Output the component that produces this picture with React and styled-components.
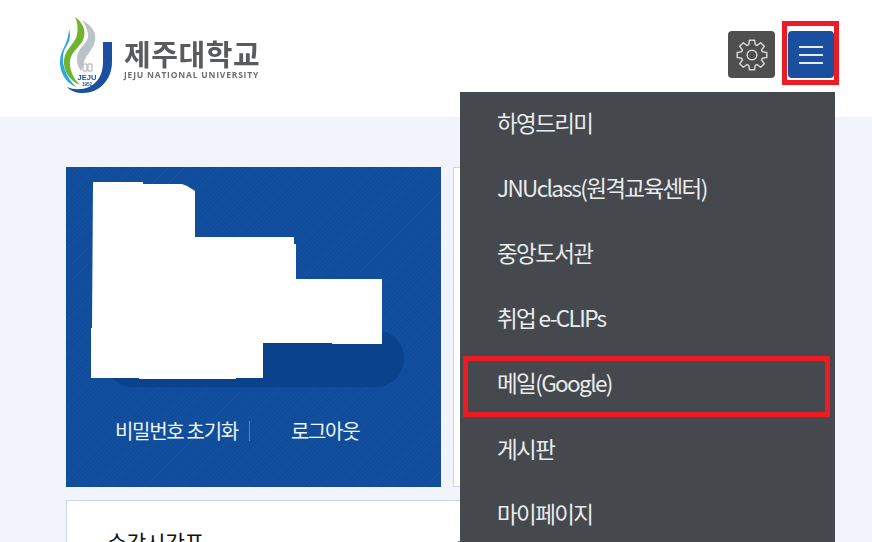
import React from 'react';
import styled, { createGlobalStyle } from 'styled-components';

const GlobalStyle = createGlobalStyle`
  html, body {
    margin: 0;
    padding: 0;
    height: 542px;
    overflow: hidden;
    background: #f1f4fa;
    font-family: "Noto Sans CJK KR", "Noto Sans", sans-serif;
  }
`;

const Page = styled.div`
  position: relative;
  width: 872px;
  height: 542px;
  overflow: hidden;
`;

const Header = styled.header`
  display: flex;
  justify-content: space-between;
  box-sizing: border-box;
  height: 117px;
  padding: 17px 38px 0 60px;
  background: #fff;
`;

const Logo = styled.div`
  display: flex;
  align-items: flex-start;
  gap: 10px;
  height: 77px;
  filter: blur(0.35px);
`;

const LogoText = styled.div`
  display: flex;
  flex-direction: column;
  gap: 4px;
  padding-top: 23px;
`;

const LogoName = styled.span`
  color: #5a5b5d;
  font-size: 29px;
  font-weight: 700;
  line-height: 26px;
  letter-spacing: 0.55px;
  white-space: nowrap;
`;

const LogoSub = styled.span`
  color: #6d6e71;
  font-family: "Open Sans", "Liberation Sans", sans-serif;
  font-size: 8.5px;
  font-weight: 700;
  line-height: 10px;
  letter-spacing: 0.8px;
  white-space: nowrap;
`;

const Actions = styled.div`
  display: flex;
  gap: 13px;
  padding-top: 14px;
`;

const IconButton = styled.div`
  position: relative;
  display: flex;
  align-items: center;
  justify-content: center;
  width: ${props => props.$wide}px;
  height: 47px;
  border-radius: 4px;
  background: ${props => props.$bg};
`;

const Burger = styled.div`
  display: flex;
  flex-direction: column;
  gap: 6px;
  width: 24px;
`;

const BurgerLine = styled.span`
  display: block;
  height: 2px;
  background: #e6ebf5;
`;

const Highlight = styled.span`
  position: absolute;
  top: ${props => props.$top}px;
  left: ${props => props.$left}px;
  width: ${props => props.$width}px;
  height: ${props => props.$height}px;
  box-sizing: border-box;
  border: 5px solid #ed1c24;
  pointer-events: none;
`;

const Main = styled.main`
  display: grid;
  grid-template-columns: 375px 1fr;
  grid-template-rows: 320px 1fr;
  gap: 13px 12px;
  width: 760px;
  padding: 50px 0 0 66px;
`;

const ProfileCard = styled.section`
  position: relative;
  display: flex;
  flex-direction: column;
  align-items: center;
  background-color: #0f4c9c;
  background-image: repeating-linear-gradient(
    135deg,
    rgba(255, 255, 255, 0.022) 0 1px,
    transparent 1px 3px
  );
`;

const Pill = styled.div`
  width: 300px;
  height: 57px;
  margin-top: 163px;
  border-radius: 29px;
  background: #0a438b;
`;

const LinkRow = styled.div`
  display: flex;
  align-items: center;
  align-self: flex-start;
  margin: 30px 0 0 49px;
  color: #f2f5fb;
  font-size: 20px;
  letter-spacing: -1.3px;
  line-height: 28px;
`;

const LinkText = styled.span`
  white-space: nowrap;
`;

const LinkDivider = styled.span`
  width: 1px;
  height: 20px;
  margin: 0 41px 0 11px;
  background: #5c83bd;
`;

const Redaction = styled.div`
  position: absolute;
  top: 0;
  left: 0;
  width: 375px;
  height: 320px;
  background: #fff;
  clip-path: polygon(
    27px 15px, 77px 15px, 77px 17px, 116px 17px, 121px 19px, 126px 22px, 129px 24px,
    129px 70px, 228px 70px, 228px 77px, 230px 77px, 230px 112px, 316px 112px,
    316px 177px, 266px 177px, 266px 176px, 197px 176px, 197px 211px, 170px 211px,
    170px 212px, 73px 212px, 73px 211px, 25px 211px, 25px 161px, 26px 161px
  );
`;

const SideCard = styled.section`
  box-sizing: border-box;
  border: 1px solid #c9d6ec;
  background: #fff;
`;

const ScheduleCard = styled.section`
  grid-column: 1 / 3;
  box-sizing: border-box;
  height: 120px;
  padding: 26px 40px;
  border: 1px solid #c9d6ec;
  background: #fff;
`;

const ScheduleHead = styled.div`
  display: flex;
  justify-content: space-between;
  align-items: center;
  width: 354px;
`;

const ScheduleTitle = styled.h2`
  margin: 0;
  color: #111;
  font-size: 21.5px;
  font-weight: 400;
  line-height: 30px;
  letter-spacing: -0.4px;
`;

const ScheduleMark = styled.span`
  width: 3px;
  height: 16px;
  margin-top: 14px;
  background: #6a86d8;
`;

const Menu = styled.nav`
  position: absolute;
  top: 92px;
  left: 460px;
  width: 375px;
  height: 450px;
  overflow: hidden;
  background: #45494d;
`;

const MenuItem = styled.a`
  position: relative;
  display: flex;
  align-items: center;
  box-sizing: border-box;
  height: 65.2px;
  padding: 0 0 6px 37px;
  color: #e9ecef;
  font-size: 22.5px;
  letter-spacing: -1.62px;
  white-space: nowrap;
`;

const menuItems = [
  '하영드리미',
  'JNUclass(원격교육센터)',
  '중앙도서관',
  '취업 e-CLIPs',
  '메일(Google)',
  '게시판',
  '마이페이지',
];

const Emblem = () => (
  <svg width="54" height="77" viewBox="60 17 54 77" aria-hidden="true">
    <path d="M82 20 C91 25 97 32 95 41 C93 50 86 55 84 62 C83 65 82 68 81 71 C76 64 76 57 79 51 C83 44 89 41 88 34 C87 29 85 24 82 20 Z" fill="#bcc3c8" />
    <path d="M75 17 C82 22 86 29 84 37 C82 46 72 50 70 60 C69 69 73 78 80 85 C70 81 63 71 64 60 C65 49 75 44 77 35 C78 29 78 23 75 17 Z" fill="#6cb52d" />
    <path d="M69 29 C71 35 70 41 66 47 C62 53 62 62 65 70 C67 76 71 82 76 87 C67 84 59.5 73 60 62 C60 52 65 47 67 40 C68 36 69 33 69 29 Z" fill="#29a9e0" />
    <path d="M103 42 H112 V62 C112 80 99 93 83 93 C76 93 71 91 67 87 C74 90 82 90 89 87 C98 83 103 74 103 62 Z" fill="#1b4fa0" />
    <path d="M83 64 H87 V71 H83 Z M88 64 H92 V71 H88 Z" fill="none" stroke="#a9aeb3" strokeWidth="1" />
    <text x="87" y="80" textAnchor="middle" fill="#1b4fa0" fontFamily="Liberation Sans" fontSize="7.5" fontWeight="700">JEJU</text>
    <text x="87" y="86" textAnchor="middle" fill="#1b4fa0" fontFamily="Liberation Sans" fontSize="4.5" fontWeight="700">1952</text>
  </svg>
);

// eight square teeth round the cog, worked out instead of typed by hand
const gearOutline = () => {
  const points = [];
  for (let i = 0; i < 8; i++) {
    const mid = (i * Math.PI) / 4;
    [[10.8, -0.3], [15, -0.17], [15, 0.17], [10.8, 0.3]].forEach(([radius, offset]) => {
      const x = 16 + radius * Math.sin(mid + offset);
      const y = 16 - radius * Math.cos(mid + offset);
      points.push(`${x.toFixed(2)},${y.toFixed(2)}`);
    });
  }
  return points.join(' ');
};

const GearIcon = () => (
  <svg width="32" height="32" viewBox="0 0 32 32" fill="none" stroke="#d4d4d4" strokeWidth="1.5" strokeLinejoin="round" aria-hidden="true">
    <polygon points={gearOutline()} />
    <circle cx="16" cy="16" r="4.8" />
  </svg>
);

export default function App() {
  return (
    <Page>
      <GlobalStyle />
      <Header>
        <Logo>
          <Emblem />
          <LogoText>
            <LogoName>제주대학교</LogoName>
            <LogoSub>JEJU NATIONAL UNIVERSITY</LogoSub>
          </LogoText>
        </Logo>
        <Actions>
          <IconButton $wide={47} $bg="#4f4f4f">
            <GearIcon />
          </IconButton>
          <IconButton $wide={46} $bg="#1a4e9f">
            <Burger>
              <BurgerLine />
              <BurgerLine />
              <BurgerLine />
            </Burger>
            <Highlight $top={-10} $left={-6} $width={57} $height={64} />
          </IconButton>
        </Actions>
      </Header>
      <Main>
        <ProfileCard>
          <Pill />
          <LinkRow>
            <LinkText>비밀번호 초기화</LinkText>
            <LinkDivider />
            <LinkText>로그아웃</LinkText>
          </LinkRow>
          <Redaction />
        </ProfileCard>
        <SideCard />
        <ScheduleCard>
          <ScheduleHead>
            <ScheduleTitle>수강시간표</ScheduleTitle>
            <ScheduleMark />
          </ScheduleHead>
        </ScheduleCard>
      </Main>
      <Menu>
        {menuItems.map(item => (
          <MenuItem key={item}>
            {item}
            {item === '메일(Google)' && <Highlight $top={3} $left={3} $width={367} $height={61} />}
          </MenuItem>
        ))}
      </Menu>
    </Page>
  );
}
